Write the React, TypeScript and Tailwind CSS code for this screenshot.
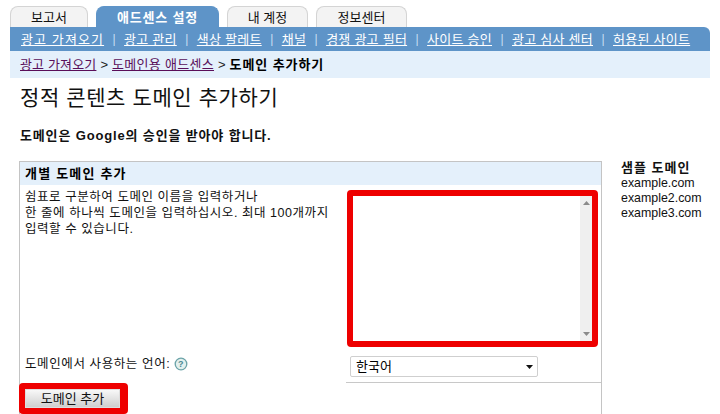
import React from "react";

const subNav = ["광고 가져오기", "광고 관리", "색상 팔레트", "채널", "경쟁 광고 필터", "사이트 승인", "광고 심사 센터", "허용된 사이트"];

function Tab({ label, w, active }: { label: string; w: string; active?: boolean }) {
  return (
    <div
      className={`${w} h-[21px] flex items-center justify-center rounded-t-lg border-t border-x text-[13px] ${
        active
          ? "bg-[#5e94c8] border-[#5e94c8] text-white font-bold tracking-[0.8px]"
          : "bg-[#f3f3f3] border-[#d4d4d4] text-[#111]"
      }`}
    >
      {label}
    </div>
  );
}

export default function App() {
  return (
    <div className="w-[720px] h-[414px] overflow-hidden bg-white text-black text-[13px] leading-[15px] font-['Liberation_Sans','Noto_Sans_CJK_KR',sans-serif]">
      <div className="pl-[10px] pt-[6px] flex gap-[8px]">
        <Tab label="보고서" w="w-[78px]" />
        <Tab label="애드센스 설정" w="w-[123px]" active />
        <Tab label="내 계정" w="w-[81px]" />
        <Tab label="정보센터" w="w-[91px]" />
      </div>
      <div className="ml-[10px] w-[700px] h-[24px] bg-[#5e94c8] rounded-tr-md flex items-center pl-[11px] text-white">
        {subNav.map((s, i) => (
          <React.Fragment key={s}>
            {i > 0 && <span className="w-[20px] text-center text-[#c9def2] text-[12px]">|</span>}
            <span className={`underline whitespace-nowrap ${i === 0 ? "tracking-[1.1px]" : "tracking-[0.25px]"}`}>{s}</span>
          </React.Fragment>
        ))}
      </div>
      <div className="ml-[10px] w-[700px] h-[27px] bg-[#e4f0fb] flex items-center pl-[10px] text-[13px]">
        <span className="underline text-[#5a0f5a] tracking-[0.15px]">광고 가져오기</span>
        <span className="mx-[4px] text-[#222]">&gt;</span>
        <span className="underline text-[#5a0f5a] tracking-[0.3px]">도메인용 애드센스</span>
        <span className="mx-[4px] text-[#222]">&gt;</span>
        <span className="font-bold tracking-[0.9px]">도메인 추가하기</span>
      </div>
      <h1 className="ml-[20px] mt-[7px] h-[26px] text-[21px] leading-[26px] tracking-[0.6px] text-[#111]">정적 콘텐츠 도메인 추가하기</h1>
      <p className="ml-[20px] mt-[17px] h-[16px] font-bold text-[13px] leading-[16px] tracking-[0.85px] text-[#111]">도메인은 Google의 승인을 받아야 합니다.</p>

      <div className="mt-[17px] flex items-start">
        <div className="ml-[19px] w-[583px] h-[260px] border border-[#c4c4c4] border-b-0">
          <div className="h-[23px] bg-[#e4f0fb] pl-[5px] flex items-center font-bold text-[13px] tracking-[1.2px]">개별 도메인 추가</div>
          <div className="flex h-[171px]">
            <div className="w-[327px] pl-[5px] pt-[4px] text-[12.5px] leading-[16px] tracking-[0.55px] text-[#111]">
              쉼표로 구분하여 도메인 이름을 입력하거나
              <br />
              한 줄에 하나씩 도메인을 입력하십시오. 최대 100개까지
              <br />
              입력할 수 있습니다.
            </div>
            <div className="w-[251px] h-[157px] mt-[5px] border-[6px] border-[#ee0000] rounded-[4px] bg-white flex justify-end">
              <div className="w-[12px] bg-[#efefef] flex flex-col justify-between items-center py-[5px]">
                <svg width="7" height="4" viewBox="0 0 7 4"><path d="M3.5 0L7 4H0z" fill="#8a8a8a" /></svg>
                <svg width="7" height="4" viewBox="0 0 7 4"><path d="M3.5 4L0 0h7z" fill="#8a8a8a" /></svg>
              </div>
            </div>
          </div>
          <div className="flex h-[26px]">
            <div className="w-[330px] pl-[5px] pt-[1px] flex items-start gap-[3px] text-[12.5px] tracking-[0.6px] text-[#111]">
              <span className="whitespace-nowrap">도메인에서 사용하는 언어:</span>
              <svg width="14" height="14" viewBox="0 0 14 14" className="ml-[1px]">
                <circle cx="7" cy="7" r="5.8" fill="#e3f0ee" stroke="#6ba3a8" strokeWidth="1.3" />
                <text x="7" y="10.2" textAnchor="middle" fontSize="9" fontWeight="700" fill="#4a8a92" fontFamily="Liberation Sans">?</text>
              </svg>
            </div>
            <div className="w-[188px] h-[21px] border border-[#cfcfcf] rounded-[2px] flex items-center justify-between pl-[5px] pr-[4px] text-[13px]">
              <span>한국어</span>
              <svg width="7" height="4" viewBox="0 0 7 4"><path d="M0 0h7L3.5 4z" fill="#111" /></svg>
            </div>
          </div>
          <div className="ml-[326px] h-px bg-[#c8c8c8]" />
          <div className="-ml-px w-[109px] h-[31px] bg-[#ee0000] rounded-[4px] flex items-start pl-[6px] pt-[6px]">
            <div className="w-[95px] h-[19px] bg-gradient-to-b from-[#f8f8f8] to-[#cfcfcf] border border-[#dedede] flex items-center justify-center text-[13px] text-[#111]">
              도메인 추가
            </div>
          </div>
        </div>
        <div className="ml-[19px] -mt-[1px] text-[12.4px] leading-[15px] text-[#111]">
          <div className="font-bold text-[13px] tracking-[1px] mb-[1px]">샘플 도메인</div>
          <div>example.com</div>
          <div>example2.com</div>
          <div>example3.com</div>
        </div>
      </div>
    </div>
  );
}
